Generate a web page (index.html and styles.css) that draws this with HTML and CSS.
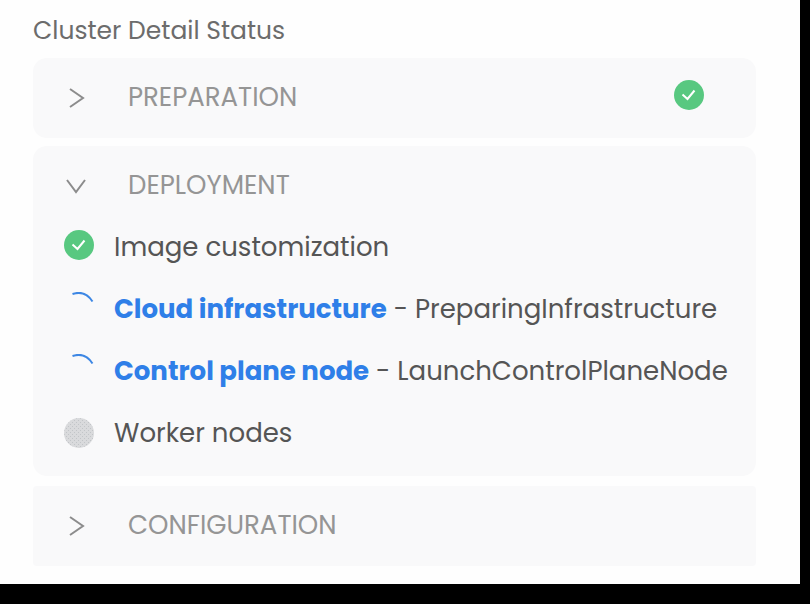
FILE: index.html
```html
<!DOCTYPE html>
<html lang="en">
<head>
<meta charset="utf-8">
<meta name="viewport" content="width=device-width, initial-scale=1">
<title>Cluster Detail Status</title>
<link rel="stylesheet" href="styles.css">
</head>
<body>
<main class="page">
  <h1 class="title">Cluster Detail Status</h1>

  <section class="panel">
    <button class="panel-header" type="button" aria-expanded="false">
      <svg class="chevron" viewBox="0 0 20 20" aria-hidden="true"><path d="M4 2 L17 11 L4 20"/></svg>
      <span class="panel-name">PREPARATION</span>
      <svg class="status status-raised" viewBox="0 0 30 30" role="img" aria-label="Complete"><circle class="done" cx="15" cy="15" r="15"/><path class="check" d="M8.5 14.5 L13.5 19 L20.5 10.5"/></svg>
    </button>
  </section>

  <section class="panel panel-open">
    <button class="panel-header" type="button" aria-expanded="true">
      <svg class="chevron" viewBox="0 0 20 20" aria-hidden="true"><path d="M1 5 L10 17 L19 5"/></svg>
      <span class="panel-name">DEPLOYMENT</span>
    </button>
    <ul class="steps">
      <li class="step">
        <svg class="status status-raised" viewBox="0 0 30 30" role="img" aria-label="Complete"><circle class="done" cx="15" cy="15" r="15"/><path class="check" d="M8.5 14.5 L13.5 19 L20.5 10.5"/></svg>
        <span>Image customization</span>
      </li>
      <li class="step">
        <svg class="status status-raised" viewBox="0 0 30 30" role="img" aria-label="In progress"><path class="arc" d="M8.5 2 C16 -0.5 23.5 1.5 28.5 9.5"/></svg>
        <span><strong>Cloud infrastructure</strong> - PreparingInfrastructure</span>
      </li>
      <li class="step">
        <svg class="status status-raised" viewBox="0 0 30 30" role="img" aria-label="In progress"><path class="arc" d="M8.5 2 C16 -0.5 23.5 1.5 28.5 9.5"/></svg>
        <span><strong>Control plane node</strong> - LaunchControlPlaneNode</span>
      </li>
      <li class="step">
        <svg class="status" viewBox="0 0 30 30" role="img" aria-label="Pending">
          <defs><pattern id="dots" width="4" height="4" patternUnits="userSpaceOnUse"><rect width="4" height="4" fill="#d9dadc"/><rect width="1" height="1" fill="#c2c5c8"/><rect x="2" y="2" width="1" height="1" fill="#c2c5c8"/></pattern></defs>
          <circle cx="15" cy="15" r="15" fill="url(#dots)"/>
        </svg>
        <span>Worker nodes</span>
      </li>
    </ul>
  </section>

  <section class="panel">
    <button class="panel-header" type="button" aria-expanded="false">
      <svg class="chevron" viewBox="0 0 20 20" aria-hidden="true"><path d="M4 2 L17 11 L4 20"/></svg>
      <span class="panel-name">CONFIGURATION</span>
    </button>
  </section>
</main>
</body>
</html>
```
FILE: styles.css
```css
* {
  box-sizing: border-box;
}

body {
  display: flex;
  min-height: 100vh;
  margin: 0;
  padding: 0 10px 20px 0;
  background: #000;
  color: #555;
  font-family: Poppins, Inter, sans-serif;
  font-size: 26px;
  line-height: 38px;
}

.page {
  flex: 1;
  padding: 12px 44px 18px 33px;
  background: #fefefe;
}

.title {
  margin: 0 0 8px;
  color: #6c6c6c;
  font-size: 25px;
  font-weight: 400;
}

.panel {
  margin-bottom: 8px;
  padding: 8px 0 10px;
  border-radius: 14px;
  background: #f9f9fa;
}

.panel-open {
  margin-bottom: 10px;
  padding-bottom: 12px;
}

.panel:last-child {
  margin-bottom: 0;
  border-radius: 4px;
}

.panel-header {
  display: flex;
  align-items: center;
  width: 100%;
  height: 62px;
  padding: 0 52px 0 33px;
  border: 0;
  background: none;
  color: #959595;
  font: inherit;
  text-align: left;
  cursor: pointer;
}

.panel-name {
  flex: 1;
}

.chevron {
  flex: none;
  width: 20px;
  height: 20px;
  margin-right: 42px;
  overflow: visible;
  fill: none;
  stroke: #8c8c8c;
  stroke-width: 2;
}

.steps {
  margin: 0;
  padding: 0 0 0 31px;
  list-style: none;
}

.step {
  display: flex;
  align-items: center;
  gap: 20px;
  min-height: 62px;
}

.step strong {
  color: #2f7fe8;
  font-weight: 700;
}

.status {
  flex: none;
  width: 30px;
  height: 30px;
}

.status-raised {
  margin-bottom: 4px;
}

.done {
  fill: #58c880;
}

.check {
  fill: none;
  stroke: #fff;
  stroke-width: 2;
}

.arc {
  fill: none;
  stroke: #3d87e4;
  stroke-width: 2;
}
```
